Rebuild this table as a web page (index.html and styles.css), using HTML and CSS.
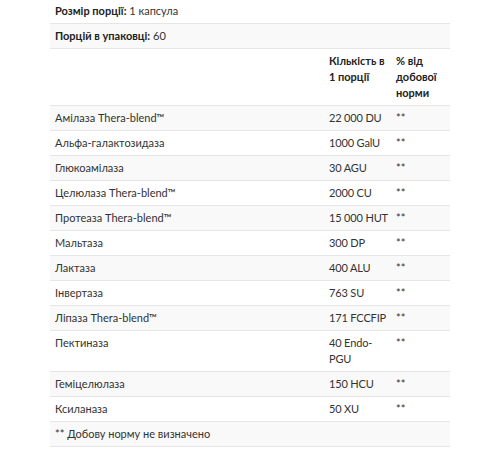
FILE: index.html
```html
<!DOCTYPE html>
<html lang="uk">
<head>
<meta charset="utf-8">
<link rel="stylesheet" href="styles.css">
</head>
<body>
<table class="facts">
  <colgroup><col class="c-name"><col class="c-amt"><col class="c-dv"></colgroup>
  <tbody>
    <tr><td colspan="3"><b>Розмір порції:</b> 1 капсула</td></tr>
    <tr class="alt"><td colspan="3"><b>Порцій в упаковці:</b> 60</td></tr>
    <tr class="head"><td></td><td><b>Кількість в 1 порції</b></td><td><b>% від добової норми</b></td></tr>
    <tr class="alt"><td>Амілаза Thera-blend™</td><td class="amt">22&#8239;000&nbsp;DU</td><td>**</td></tr>
    <tr><td>Альфа-галактозидаза</td><td class="amt">1000&nbsp;GalU</td><td>**</td></tr>
    <tr class="alt"><td>Глюкоамілаза</td><td class="amt">30&nbsp;AGU</td><td>**</td></tr>
    <tr><td>Целюлаза Thera-blend™</td><td class="amt">2000&nbsp;CU</td><td>**</td></tr>
    <tr class="alt"><td>Протеаза Thera-blend™</td><td class="amt">15&#8239;000&nbsp;HUT</td><td>**</td></tr>
    <tr><td>Мальтаза</td><td class="amt">300&nbsp;DP</td><td>**</td></tr>
    <tr class="alt"><td>Лактаза</td><td class="amt">400&nbsp;ALU</td><td>**</td></tr>
    <tr><td>Інвертаза</td><td class="amt">763&nbsp;SU</td><td>**</td></tr>
    <tr class="alt"><td>Ліпаза Thera-blend™</td><td class="amt">171&nbsp;FCCFIP</td><td>**</td></tr>
    <tr><td>Пектиназа</td><td class="amt">40&nbsp;Endo-PGU</td><td>**</td></tr>
    <tr class="alt"><td>Геміцелюлаза</td><td class="amt">150&nbsp;HCU</td><td>**</td></tr>
    <tr><td>Ксиланаза</td><td class="amt">50&nbsp;XU</td><td>**</td></tr>
    <tr class="alt"><td colspan="3">** Добову норму не визначено</td></tr>
  </tbody>
</table>
</body>
</html>
```
FILE: styles.css
```css
html, body {
  margin: 0;
  padding: 0;
  background: #fff;
}
body {
  font-family: Lato, "Noto Sans", sans-serif;
  font-size: 11px;
  color: #333;
}
.facts {
  width: 400px;
  margin: -1px 0 0 50px;
  border-collapse: collapse;
  table-layout: fixed;
}
.c-amt { width: 67px; }
.c-dv { width: 59px; }
.facts td {
  padding: 4px 4px 4px 5px;
  line-height: 16px;
  vertical-align: top;
  border-bottom: 1px solid #e6e6e6;
}
.facts td.amt {
  letter-spacing: -0.15px;
  padding-right: 2px;
}
.facts tr.alt td {
  background: #f9f9f9;
}
.facts b {
  font-weight: bold;
  color: #222;
}
```
